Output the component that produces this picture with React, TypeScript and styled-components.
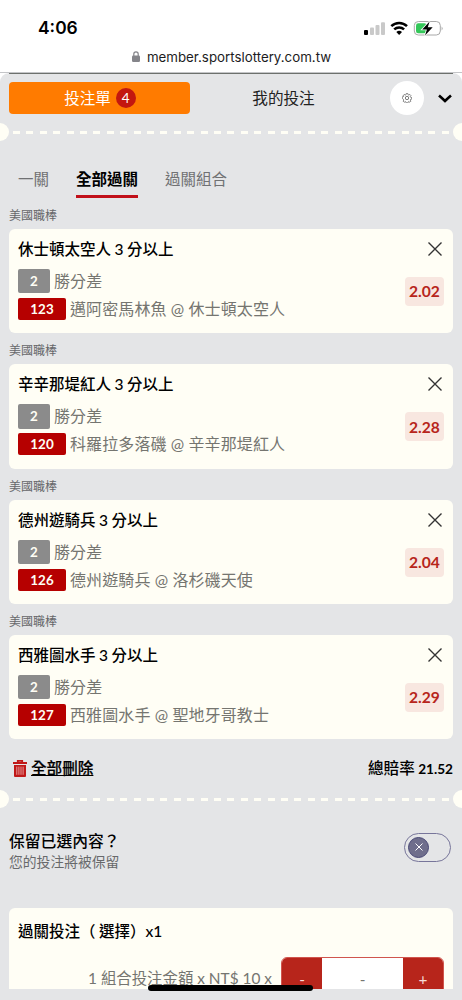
import React from 'react';
import styled, { createGlobalStyle } from 'styled-components';

const GlobalStyle = createGlobalStyle`
  * { box-sizing: border-box; }
  body {
    margin: 0;
    background: #e4e5e7;
    font-family: Lato, 'Noto Sans CJK TC', sans-serif;
    color: #111;
  }
  button { font: inherit; color: inherit; border: 0; padding: 0; margin: 0; background: none; }
`;

const cream = '#fffef5';
const red = '#b7251b';

const Screen = styled.div`
  position: relative;
  width: 462px;
  height: 1000px;
  overflow: hidden;
  display: flex;
  flex-direction: column;
  background: #fff;
`;

const StatusBar = styled.header`
  height: 45px;
  padding: 10px 19px 0 38px;
  display: flex;
  justify-content: space-between;
  align-items: center;
  font-family: Inter, sans-serif;
`;

const Clock = styled.span`
  font-size: 17.4px;
  line-height: 22px;
  font-weight: 600;
  color: #000;
`;

const StatusIcons = styled.svg`
  width: 80px;
  height: 18px;
  display: block;
`;

const AddressBar = styled.div`
  height: 28px;
  padding: 1px 0 5px 1px;
  display: flex;
  justify-content: center;
  align-items: center;
  gap: 7px;
  border-bottom: 1px solid #c4c5c8;
  font-family: Inter, sans-serif;
  font-size: 13.3px;
  color: #1c1c1e;
`;

const Panel = styled.main`
  flex: none;
  height: 916px;
  overflow: hidden;
  display: flex;
  flex-direction: column;
  background: #e4e5e7;
  border-radius: 9px 9px 0 0;
`;

const TopRule = styled.div`
  flex: none;
  height: 1px;
  margin: 0 9px;
  background: #6c706c;
`;

const SlipHeader = styled.nav`
  flex: none;
  height: 49px;
  padding: 0 9px 1px;
  display: flex;
  align-items: center;
`;

const SlipButton = styled.button`
  width: 181px;
  height: 32px;
  border-radius: 4px;
  background: #ff7b00;
  color: #fff;
  display: flex;
  align-items: center;
  justify-content: center;
  gap: 5px;
  padding-left: 1px;
  font-size: 15.5px;
`;

const SlipLabel = styled.span`
  padding-bottom: 2px;
`;

const Count = styled.span`
  width: 20px;
  height: 20px;
  border-radius: 50%;
  background: #c3170f;
  display: grid;
  place-items: center;
  font-size: 13.5px;
  line-height: 20px;
`;

const MyBets = styled.button`
  width: 187px;
  padding-bottom: 2px;
  font-size: 15.6px;
  text-align: center;
  color: #222;
`;

const SettingsButton = styled.button`
  width: 34px;
  height: 34px;
  margin-left: 13px;
  border-radius: 50%;
  background: #fff;
  display: grid;
  place-items: center;
`;

const Chevron = styled.svg`
  width: 16px;
  height: 12px;
  margin-left: 13px;
`;

const PerforationRow = styled.div`
  flex: none;
  height: 18px;
  display: flex;
  align-items: center;
  justify-content: space-between;
`;

const Notch = styled.span<{ $side: 'left' | 'right' }>`
  width: 9px;
  height: 18px;
  background: ${cream};
  border-radius: ${p => (p.$side === 'left' ? '0 9px 9px 0' : '9px 0 0 9px')};
`;

const Dashes = styled.span`
  width: 436px;
  height: 2.4px;
  margin-top: 1px;
  background: repeating-linear-gradient(90deg, ${cream} 0 7px, transparent 7px 13.4px);
`;

const Tabs = styled.div`
  flex: none;
  height: 56.8px;
  padding: 26px 18px 0;
  display: flex;
  gap: 27px;
`;

const Tab = styled.button<{ $active?: boolean }>`
  height: 31px;
  font-size: 15.5px;
  line-height: 24px;
  padding-bottom: 4px;
  display: block;
  color: ${p => (p.$active ? '#000' : '#707173')};
  font-weight: ${p => (p.$active ? 700 : 400)};
  border-bottom: 3px solid ${p => (p.$active ? '#c1101a' : 'transparent')};
`;

const Bet = styled.section`
  flex: none;
  height: 135.4px;
`;

const League = styled.div`
  height: 22px;
  margin-bottom: 9px;
  padding: 0 9px;
  font-size: 12px;
  line-height: 36px;
  color: #66676a;
`;

const Card = styled.article`
  height: 104.4px;
  margin: 0 9px;
  padding: 9px 9px 0;
  border-radius: 6px;
  background: ${cream};
  display: flex;
  justify-content: space-between;
`;

const CardInfo = styled.div`
  display: flex;
  flex-direction: column;
`;

const Title = styled.h2`
  margin: 0;
  font-size: 15.5px;
  line-height: 22px;
  font-weight: 500;
  word-spacing: -0.4px;
  color: #000;
  white-space: nowrap;
`;

const Line = styled.div<{ $top: number }>`
  margin-top: ${p => p.$top}px;
  display: flex;
  align-items: center;
  gap: 4px;
  font-size: 16px;
  line-height: 22px;
  letter-spacing: 0.1px;
  color: #757570;
  white-space: nowrap;
`;

const Tag = styled.span<{ $kind: 'count' | 'match' }>`
  width: ${p => (p.$kind === 'count' ? 32 : 48)}px;
  height: ${p => (p.$kind === 'count' ? 24.5 : 22)}px;
  border-radius: 2px;
  background: ${p => (p.$kind === 'count' ? '#8b8b8b' : '#b60000')};
  color: ${cream};
  display: grid;
  place-items: center;
  font-size: 13.4px;
  font-weight: 700;
`;

const CardSide = styled.div`
  display: flex;
  flex-direction: column;
  align-items: flex-end;
`;

const Remove = styled.button`
  width: 18px;
  height: 22px;
  display: grid;
  place-items: center;
`;

const Odds = styled.span`
  width: 39px;
  height: 29px;
  margin-top: 17px;
  border-radius: 4px;
  background: #f8e7e0;
  color: ${red};
  display: grid;
  place-items: center;
  font-size: 15.6px;
  font-weight: 700;
`;

const Totals = styled.div`
  flex: none;
  height: 50.6px;
  padding: 17px 9px 0 13px;
  display: flex;
  align-items: flex-start;
  justify-content: space-between;
  font-size: 15.6px;
  line-height: 24px;
  color: #000;
`;

const DeleteAll = styled.button`
  display: flex;
  align-items: center;
  gap: 4px;
  line-height: 24px;
  font-weight: 500;
  -webkit-text-stroke: 0.2px currentColor;
  text-decoration: underline;
  text-underline-offset: 1px;
  text-decoration-thickness: 1.3px;
`;

const Total = styled.span`
  font-weight: 500;
  word-spacing: -0.5px;
`;

const TotalValue = styled.b`
  font-size: 13.6px;
`;

const KeepRow = styled.div`
  flex: none;
  height: 100px;
  padding: 22px 11px 0 9px;
  display: flex;
  justify-content: space-between;
`;

const KeepTitle = styled.div`
  font-size: 15.8px;
  line-height: 22px;
  font-weight: 500;
  color: #000;
`;

const KeepNote = styled.div`
  font-size: 13.8px;
  line-height: 20px;
  color: #68696b;
`;

const Toggle = styled.button`
  width: 47px;
  height: 29px;
  margin-top: 3px;
  padding-left: 3px;
  border: 1px solid #77759a;
  border-radius: 15px;
  display: flex;
  align-items: center;
`;

const Knob = styled.span`
  width: 21px;
  height: 21px;
  border: 1px solid #484775;
  border-radius: 50%;
  background: #6f6e8c;
  display: grid;
  place-items: center;
`;

const StakeCard = styled.section`
  flex: none;
  height: 81px;
  margin: 0 9px;
  padding: 12px 9px 0;
  border-radius: 6px 6px 0 0;
  background: ${cream};
  overflow: hidden;
`;

const StakeRow = styled.div`
  height: 42px;
  margin-top: 15px;
  display: flex;
  justify-content: flex-end;
  gap: 9px;
  color: #757570;
  font-size: 15.4px;
  line-height: 43px;
  white-space: nowrap;
`;

const Stepper = styled.div`
  width: 163px;
  border: 1px solid #d0554d;
  border-radius: 6px;
  overflow: hidden;
  display: grid;
  grid-template-columns: 40px 1fr 40px;
  background: #fff;
  text-align: center;
`;

const Step = styled.button`
  background: ${red};
  color: #f6dcd9;
  line-height: 41px;
`;

const BottomArea = styled.footer`
  flex: 1;
  background: #e4e5e7;
`;

const HomeIndicator = styled.div`
  position: absolute;
  left: 148px;
  top: 985px;
  width: 165px;
  height: 6px;
  border-radius: 3px;
  background: #000;
`;

const bets = [
  { pick: '休士頓太空人 3 分以上', no: '123', match: '邁阿密馬林魚 @ 休士頓太空人', odds: '2.02' },
  { pick: '辛辛那堤紅人 3 分以上', no: '120', match: '科羅拉多落磯 @ 辛辛那堤紅人', odds: '2.28' },
  { pick: '德州遊騎兵 3 分以上', no: '126', match: '德州遊騎兵 @ 洛杉磯天使', odds: '2.04' },
  { pick: '西雅圖水手 3 分以上', no: '127', match: '西雅圖水手 @ 聖地牙哥教士', odds: '2.29' },
];

const Perforation = () => (
  <PerforationRow>
    <Notch $side="left" />
    <Dashes />
    <Notch $side="right" />
  </PerforationRow>
);

const PhoneStatus = () => (
  <StatusIcons viewBox="0 0 80 18">
    <rect x="1" y="11" width="4" height="5" rx="1" fill="#000" />
    <rect x="7" y="8.5" width="4" height="7.5" rx="1" fill="#c9c9c9" />
    <rect x="12.500" y="6" width="4" height="10" rx="1" fill="#c9c9c9" />
    <rect x="18" y="3.300" width="4" height="12.700" rx="1" fill="#c9c9c9" />
    <g fill="none" stroke="#000" strokeWidth="2.500">
      <path d="M28.300 7.200a11.300 11.300 0 0 1 15.700 0" />
      <path d="M31.200 10.400a7.200 7.200 0 0 1 9.900 0" />
    </g>
    <path d="M33.300 13a4.200 4.200 0 0 1 5.700 0l-2.850 3z" fill="#000" />
    <rect x="51.300" y="2.500" width="26" height="13.500" rx="4" fill="none" stroke="#a8a8a8" />
    <path d="M78.600 7.400q2 2.100 0 4.200z" fill="#a8a8a8" />
    <rect x="53" y="4.300" width="10.500" height="10" rx="2.300" fill="#34c759" />
    <path d="M66.600 2.600L59.200 10.400H63.900L62 16.400L69.700 8.300H64.800Z" fill="#000" stroke="#fff" strokeWidth="1.600" paintOrder="stroke" />
  </StatusIcons>
);

const Gear = () => (
  <svg width="10" height="10" viewBox="0 0 24 24" fill="none" stroke="#555" strokeWidth="1.800" strokeLinejoin="round">
    <path d="M10 1.500h4l.8 3.100 1.800.8 2.700-1.700 2.900 2.900-1.700 2.700.8 1.800 3.100.8v4l-3.100.8-.8 1.800 1.700 2.700-2.900 2.900-2.700-1.700-1.800.8-.8 3.100h-4l-.8-3.100-1.800-.8-2.700 1.700-2.900-2.900 1.700-2.700-.8-1.800L-.4 14v-4l3.100-.8.8-1.800L1.800 6.600l2.900-2.900 2.700 1.700 1.800-.8z" transform="translate(1 0) scale(.92)" />
    <circle cx="12" cy="12" r="4" />
  </svg>
);

const Cross = () => (
  <svg width="14" height="14" viewBox="0 0 14 14" stroke="#333" strokeWidth="1.350">
    <path d="M.5.5l13 13M13.500.5L.5 13.500" />
  </svg>
);

const Trash = () => (
  <svg width="14" height="17" viewBox="0 0 14 17" fill="none">
    <path d="M4.800 2.200V.8h4.400v1.400M0 3h14" stroke="#c01818" strokeWidth="1.800" />
    <path d="M1 5h12v11a1 1 0 0 1-1 1H2a1 1 0 0 1-1-1z" fill="#c01818" />
    <path d="M3.800 6.600v8.200M5.900 6.600v8.200M8 6.600v8.200M10.100 6.600v8.200" stroke="#eaa9a9" strokeWidth=".9" />
  </svg>
);

export default function App() {
  return (
    <Screen>
      <GlobalStyle />
      <StatusBar>
        <Clock>4:06</Clock>
        <PhoneStatus />
      </StatusBar>
      <AddressBar>
        <svg width="8" height="11" viewBox="0 0 8 11">
          <rect y="4.500" width="8" height="6.500" rx="1.200" fill="#85858a" />
          <path d="M1.800 5V3a2.200 2.200 0 0 1 4.400 0v2" fill="none" stroke="#85858a" strokeWidth="1.200" />
        </svg>
        <span>member.sportslottery.com.tw</span>
      </AddressBar>
      <Panel>
        <TopRule />
        <SlipHeader>
          <SlipButton><SlipLabel>投注單</SlipLabel><Count>4</Count></SlipButton>
          <MyBets>我的投注</MyBets>
          <SettingsButton><Gear /></SettingsButton>
          <Chevron viewBox="0 0 16 12" fill="none" stroke="#000" strokeWidth="2.600">
            <path d="M2 3.500Q5.500 6.500 8 9Q10.500 6.500 14 3.500" />
          </Chevron>
        </SlipHeader>
        <Perforation />
        <Tabs>
          <Tab>一關</Tab>
          <Tab $active>全部過關</Tab>
          <Tab>過關組合</Tab>
        </Tabs>
        {bets.map(bet => (
          <Bet key={bet.no}>
            <League>美國職棒</League>
            <Card>
              <CardInfo>
                <Title>{bet.pick}</Title>
                <Line $top={9}><Tag $kind="count">2</Tag>勝分差</Line>
                <Line $top={4.5}><Tag $kind="match">{bet.no}</Tag>{bet.match}</Line>
              </CardInfo>
              <CardSide>
                <Remove><Cross /></Remove>
                <Odds>{bet.odds}</Odds>
              </CardSide>
            </Card>
          </Bet>
        ))}
        <Totals>
          <DeleteAll><Trash />全部刪除</DeleteAll>
          <Total>總賠率 <TotalValue>21.52</TotalValue></Total>
        </Totals>
        <Perforation />
        <KeepRow>
          <div>
            <KeepTitle>保留已選內容？</KeepTitle>
            <KeepNote>您的投注將被保留</KeepNote>
          </div>
          <Toggle>
            <Knob>
              <svg width="8" height="8" viewBox="0 0 8 8" stroke="#fff"><path d="M.5.5l7 7M7.500.5l-7 7" /></svg>
            </Knob>
          </Toggle>
        </KeepRow>
        <StakeCard>
          <Title>過關投注（ 選擇）x1</Title>
          <StakeRow>
            <span>1 組合投注金額 x NT$ 10 x</span>
            <Stepper>
              <Step>-</Step>
              <span>-</span>
              <Step>+</Step>
            </Stepper>
          </StakeRow>
        </StakeCard>
      </Panel>
      <BottomArea />
      <HomeIndicator />
    </Screen>
  );
}
